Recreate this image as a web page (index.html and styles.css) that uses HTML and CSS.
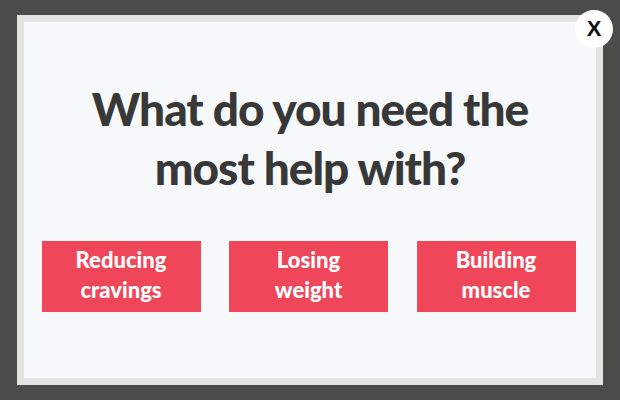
FILE: index.html
```html
<!DOCTYPE html>
<html>
<head>
<meta charset="utf-8">
<link rel="stylesheet" href="styles.css">
</head>
<body>
<div class="modal">
  <div class="inner">
    <h1 class="title">What do you need the<br>most help with?</h1>
    <div class="options">
      <button class="opt">Reducing<br>cravings</button>
      <button class="opt">Losing<br>weight</button>
      <button class="opt">Building<br>muscle</button>
    </div>
  </div>
  <button class="close">X</button>
</div>
</body>
</html>
```
FILE: styles.css
```css
html, body {
  margin: 0;
  padding: 0;
}
body {
  background: #4b4b49;
  width: 620px;
  height: 400px;
  overflow: hidden;
  padding-top: 15px;
  box-sizing: border-box;
}
.modal {
  position: relative;
  margin-left: 17px;
  width: 586px;
  height: 370px;
  box-sizing: border-box;
  border: 7px solid #e3e3e1;
  background: #f7f8fa;
}
.inner {
  height: 100%;
  display: flex;
  flex-direction: column;
  align-items: center;
  font-family: Lato, "Noto Sans", sans-serif;
}
.title {
  margin: 57px 0 0 0;
  font-size: 46px;
  line-height: 59px;
  font-weight: 900;
  color: #383838;
  text-align: center;
  letter-spacing: -1px;
}
.options {
  display: flex;
  gap: 28.5px;
  margin-top: 44px;
  margin-right: 3px;
}
.opt {
  width: 159px;
  height: 71px;
  border: none;
  background: #ef4759;
  color: #ffffff;
  font-family: Lato, "Noto Sans", sans-serif;
  font-weight: 900;
  font-size: 22px;
  line-height: 30px;
  padding: 0 0 3px 0;
}
.close {
  position: absolute;
  top: -12px;
  right: -17px;
  width: 38px;
  height: 38px;
  border-radius: 50%;
  border: none;
  background: #ffffff;
  color: #111;
  font-family: "Liberation Sans", Arial, sans-serif;
  font-weight: 700;
  font-size: 22px;
  padding: 0;
}
```
